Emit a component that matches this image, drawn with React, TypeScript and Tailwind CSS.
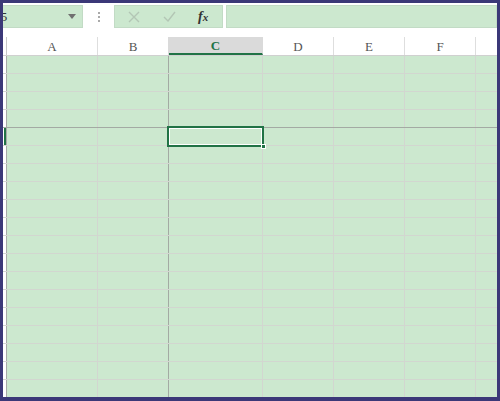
import React from 'react';

const columns = [
  { label: 'A', width: 'w-[91px]' },
  { label: 'B', width: 'w-[71px]', freeze: true },
  { label: 'C', width: 'w-[94px]', active: true },
  { label: 'D', width: 'w-[71px]' },
  { label: 'E', width: 'w-[71px]' },
  { label: 'F', width: 'w-[71px]' },
];

const rows = Array.from({ length: 20 }, (_, i) => i + 1);

export default function App() {
  return (
    <div className="w-[500px] h-[401px] bg-[#3b3878] pt-[3px] pl-[3px] pr-[3px] pb-[4px] overflow-hidden font-['Liberation_Sans',sans-serif]">
      <div className="w-full h-full bg-white flex flex-col overflow-hidden">
        {/* Formula bar */}
        <div className="h-[34px] flex items-start pt-[2px] shrink-0">
          <div className="ml-[-14px] w-[94px] h-[23px] bg-[#cce8cf] border border-[#c2dbc5] flex items-center justify-between pl-[2px] pr-[6px]">
            <span className="text-[13px] text-[#333] font-['Liberation_Serif',serif]">C5</span>
            <svg width="8" height="5" viewBox="0 0 8 5">
              <path d="M0 0h8L4 5z" fill="#707070" />
            </svg>
          </div>
          <div className="w-[31px] h-[23px] flex flex-col items-center justify-center gap-[2px]">
            <span className="w-[2px] h-[2px] bg-[#aaa]" />
            <span className="w-[2px] h-[2px] bg-[#aaa]" />
            <span className="w-[2px] h-[2px] bg-[#aaa]" />
          </div>
          <div className="w-[109px] h-[23px] bg-[#cce8cf] border border-[#c2dbc5] flex items-center">
            <svg width="12" height="12" viewBox="0 0 12 12" className="ml-[13px]">
              <path d="M1 1l10 10M11 1L1 11" stroke="#b3c6b5" strokeWidth="1.4" />
            </svg>
            <svg width="13" height="11" viewBox="0 0 13 11" className="ml-[23px]">
              <path d="M1 6l4 4 7-9" stroke="#b3c6b5" strokeWidth="1.4" fill="none" />
            </svg>
            <span className="ml-[22px] text-[14px] italic font-semibold text-[#333] font-['Liberation_Serif',serif] leading-none">
              f<span className="text-[11px]">x</span>
            </span>
          </div>
          <div className="ml-[3px] flex-1 h-[23px] bg-[#cce8cf] border border-[#c2dbc5]" />
        </div>

        {/* Grid */}
        <div className="flex-1 overflow-hidden">
          {/* Column header */}
          <div className="flex h-[19px] border-b border-[#d0d0d0] bg-white">
            <div className="w-[4px] shrink-0 border-r border-[#c8c8c8]" />
            {columns.map((c) => (
              <div
                key={c.label}
                className={`${c.width} shrink-0 flex items-center justify-center pt-[2px] text-[13px] font-['Liberation_Serif',serif] border-r ${
                  c.active
                    ? 'bg-[#dadada] text-[#217346] font-bold border-b-2 border-b-[#217346] border-r-[#dadada]'
                    : c.freeze
                    ? 'text-[#555] border-r-[#dadada]'
                    : 'text-[#555] border-r-[#dedede]'
                }`}
              >
                {c.label}
              </div>
            ))}
            <div className="flex-1" />
          </div>

          {/* Rows */}
          {rows.map((r) => {
            const freezeRow = r === 4;
            const activeRow = r === 5;
            return (
              <div
                key={r}
                className={`flex h-[18px] border-b ${freezeRow ? 'border-[#a3aaa3]' : 'border-[#d2d6d0]'}`}
              >
                <div className="relative w-[4px] shrink-0 bg-white border-r border-[#a8a8a8]">
                  {activeRow && <div className="absolute left-[1px] top-0 bottom-0 w-[2px] bg-[#217346]" />}
                </div>
                {columns.map((c) => (
                  <div
                    key={c.label}
                    className={`relative ${c.width} shrink-0 bg-[#cce8cf] border-r ${
                      c.freeze ? 'border-[#a3aaa3]' : 'border-[#d2d6d0]'
                    }`}
                  >
                    {activeRow && c.active && (
                      <div className="absolute left-[-2px] top-[-2px] right-[-2px] bottom-[-2px] border-2 border-[#217346] z-10">
                        <div className="w-full h-full border border-white" />
                        <div className="absolute right-[-4px] bottom-[-4px] w-[5px] h-[5px] bg-[#217346] border border-white" />
                      </div>
                    )}
                  </div>
                ))}
                <div className="flex-1 bg-[#cce8cf]" />
              </div>
            );
          })}
        </div>
      </div>
    </div>
  );
}
